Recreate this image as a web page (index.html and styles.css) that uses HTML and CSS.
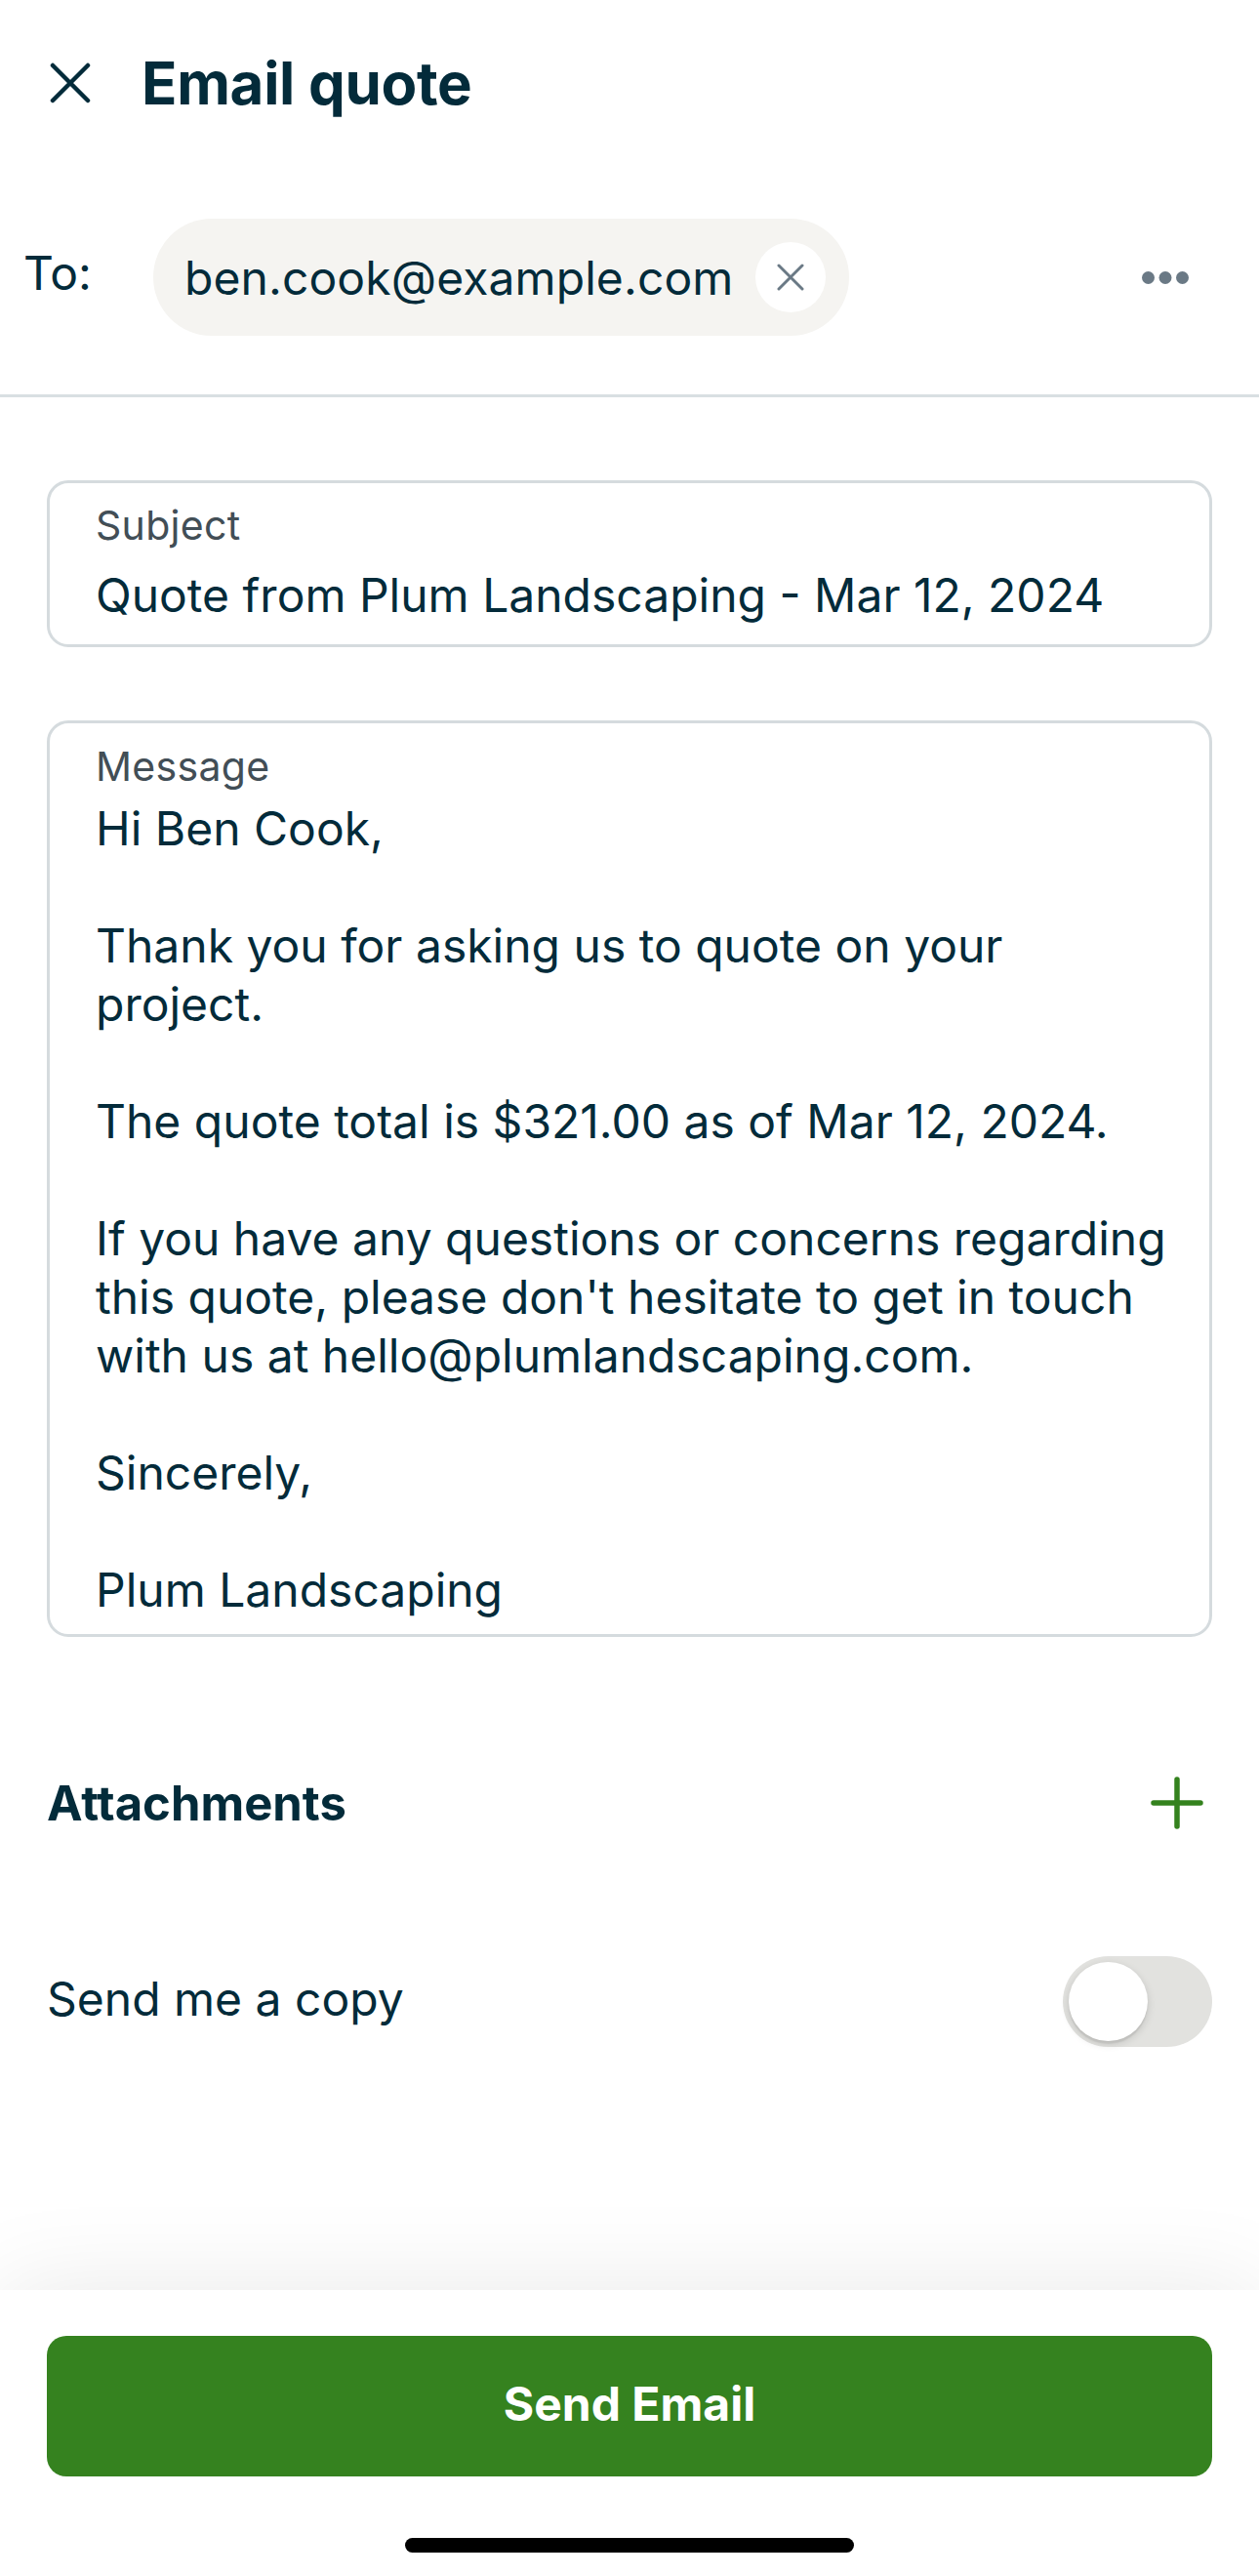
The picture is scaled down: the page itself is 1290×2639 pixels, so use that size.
FILE: index.html
```html
<!DOCTYPE html>
<html lang="en">
<head>
<meta charset="utf-8">
<title>Email quote</title>
<link rel="stylesheet" href="styles.css">
</head>
<body>
<div class="screen">
  <header class="topbar">
    <button class="close-btn" aria-label="Close">
      <svg width="42" height="42" viewBox="0 0 42 42"><path d="M3 3 L39 39 M39 3 L3 39" stroke="#032B3A" stroke-width="4.5" stroke-linecap="round" fill="none"/></svg>
    </button>
    <h1 class="title">Email quote</h1>
  </header>

  <div class="to-row">
    <span class="to-label">To:</span>
    <div class="chip">
      <span class="chip-text">ben.cook@example.com</span>
      <span class="chip-remove">
        <svg width="28" height="28" viewBox="0 0 28 28"><path d="M2 2 L26 26 M26 2 L2 26" stroke="#6A7985" stroke-width="3" stroke-linecap="round" fill="none"/></svg>
      </span>
    </div>
    <button class="more" aria-label="More">
      <svg width="48" height="13" viewBox="0 0 48 13"><circle cx="6.5" cy="6.5" r="6.5" fill="#6A7985"/><circle cx="24" cy="6.5" r="6.5" fill="#6A7985"/><circle cx="41.5" cy="6.5" r="6.5" fill="#6A7985"/></svg>
    </button>
  </div>

  <main class="form">
    <div class="field subject">
      <div class="field-label">Subject</div>
      <div class="field-value">Quote from Plum Landscaping - Mar 12, 2024</div>
    </div>

    <div class="field message">
      <div class="field-label">Message</div>
      <div class="field-value message-text">Hi Ben Cook,

Thank you for asking us to quote on your
project.

The quote total is $321.00 as of Mar 12, 2024.

If you have any questions or concerns regarding
this quote, please don't hesitate to get in touch
with us at hello@plumlandscaping.com.

Sincerely,

Plum Landscaping</div>
    </div>

    <div class="row attachments">
      <h2 class="row-title">Attachments</h2>
      <svg class="plus" width="54" height="54" viewBox="0 0 54 54"><path d="M27 3 L27 51 M3 27 L51 27" stroke="#34821E" stroke-width="5.5" stroke-linecap="round" fill="none"/></svg>
    </div>

    <div class="row copy">
      <span class="row-text">Send me a copy</span>
      <span class="toggle"><span class="knob"></span></span>
    </div>
  </main>

  <footer class="footer">
    <button class="send">Send Email</button>
    <div class="home-indicator"></div>
  </footer>
</div>
</body>
</html>
```

FILE: styles.css
```css
* {
  box-sizing: border-box;
  margin: 0;
  padding: 0;
}

html, body {
  background: #ffffff;
}

body {
  font-family: Inter, "Noto Sans", sans-serif;
  color: #032B3A;
}

button {
  font-family: inherit;
  border: 0;
  background: none;
  cursor: pointer;
}

.screen {
  width: 1290px;
  min-height: 2639px;
  display: flex;
  flex-direction: column;
}

/* Header */
.topbar {
  height: 170px;
  display: flex;
  align-items: center;
  padding-left: 51px;
  gap: 52px;
}

.close-btn {
  width: 42px;
  height: 42px;
  display: block;
}

.close-btn svg {
  display: block;
}

.title {
  font-size: 60px;
  font-weight: 700;
  line-height: normal;
  letter-spacing: -0.3px;
  color: #032B3A;
}

/* To row */
.to-row {
  display: flex;
  align-items: center;
  padding: 54px 72px 60px 0;
  border-bottom: 3px solid #D9DFE2;
}

.to-label {
  width: 157px;
  padding-left: 24px;
  font-size: 48px;
  margin-bottom: 10px;
}

.chip {
  display: flex;
  align-items: center;
  height: 120px;
  border-radius: 60px;
  background: #F5F4F1;
  padding: 0 24px 0 32px;
  gap: 23px;
}

.chip-text {
  font-size: 48px;
  line-height: normal;
  letter-spacing: 0.1px;
}

.chip-remove {
  width: 72px;
  height: 72px;
  border-radius: 50%;
  background: #ffffff;
  display: flex;
  align-items: center;
  justify-content: center;
}

.chip-remove svg {
  display: block;
}

.more {
  margin-left: auto;
  display: flex;
  align-items: center;
}

.more svg {
  display: block;
}

/* Form */
.form {
  flex: 1;
  display: flex;
  flex-direction: column;
  padding: 85px 48px 0;
}

.field {
  border: 3px solid #D5DBDE;
  border-radius: 22px;
  padding: 19px 20px 20px 47px;
}

.field-label {
  font-size: 41px;
  line-height: 48px;
  color: #424E56;
  letter-spacing: 0.3px;
}

.field-value {
  font-size: 48px;
  line-height: 60px;
  color: #032B3A;
}

.subject .field-value {
  margin-top: 18px;
  white-space: nowrap;
}

.message {
  margin-top: 75px;
  padding-top: 20px;
  padding-bottom: 15px;
}

.message .field-value {
  margin-top: 10px;
  white-space: pre-line;
}

.row {
  display: flex;
  align-items: center;
  justify-content: space-between;
  height: 120px;
}

.attachments {
  margin-top: 110px;
}

.row-title {
  font-size: 49px;
  font-weight: 700;
  line-height: normal;
  color: #032B3A;
}

.plus {
  display: block;
  margin-right: 9px;
}

.copy {
  margin-top: 83px;
}

.row-text {
  font-size: 48px;
  line-height: normal;
  margin-bottom: 5px;
}

.toggle {
  width: 153px;
  height: 93px;
  border-radius: 47px;
  background: #E2E2DF;
  padding: 6px;
  display: flex;
  align-items: center;
}

.knob {
  width: 81px;
  height: 81px;
  border-radius: 50%;
  background: #ffffff;
  box-shadow: 0 3px 8px rgba(0, 0, 0, 0.15), 0 3px 1px rgba(0, 0, 0, 0.06);
}

/* Footer */
.footer {
  flex-shrink: 0;
  height: 293px;
  padding: 47px 48px 24px;
  display: flex;
  flex-direction: column;
  align-items: center;
  background: #ffffff;
  box-shadow: 0 0 96px rgba(0, 0, 0, 0.09);
}

.send {
  width: 100%;
  height: 144px;
  border-radius: 20px;
  background: #35821F;
  color: #ffffff;
  font-size: 48px;
  font-weight: 700;
  padding-bottom: 5px;
}

.home-indicator {
  margin-top: 63px;
  width: 460px;
  height: 15px;
  border-radius: 8px;
  background: #000000;
}
```
